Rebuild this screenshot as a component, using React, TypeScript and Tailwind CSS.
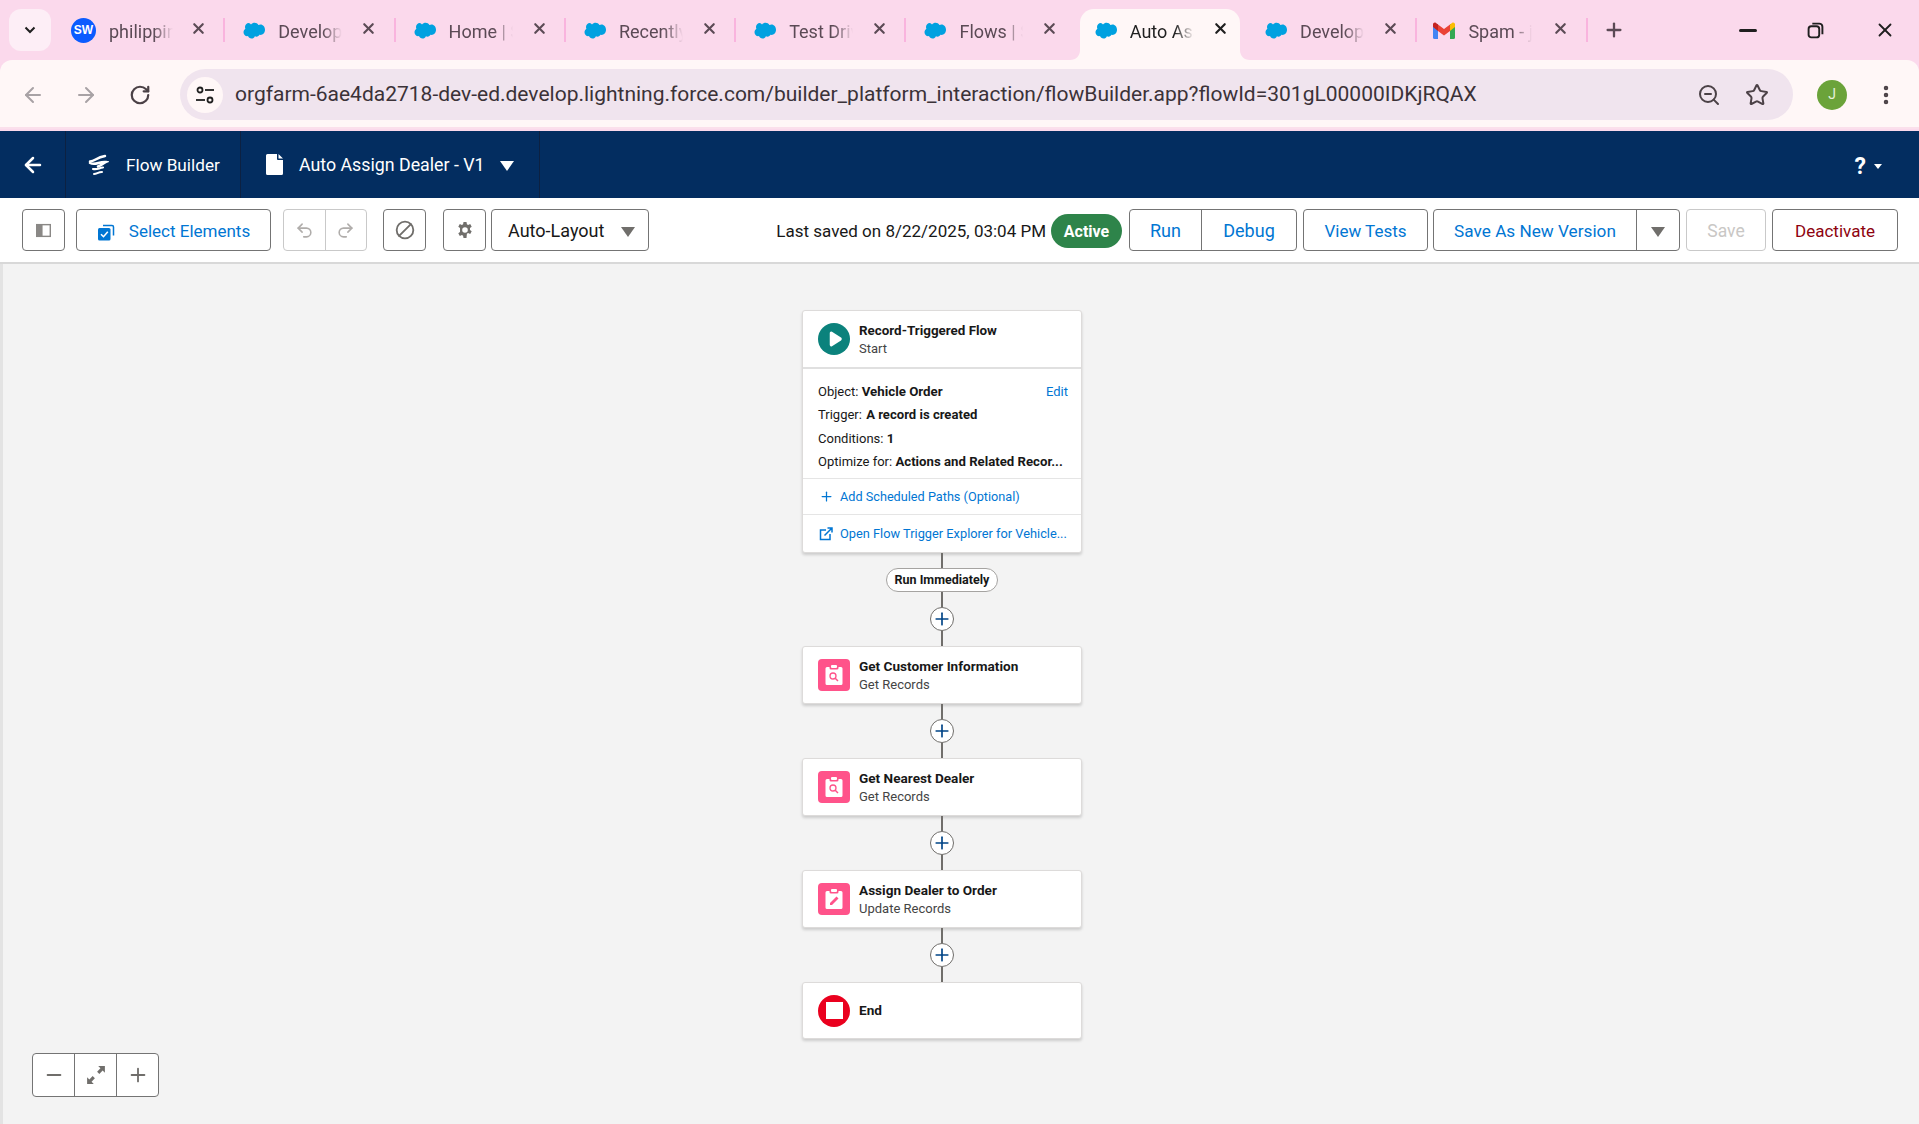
import { ReactNode } from 'react'
import { ArrowLeft, ArrowRight, RotateCw, ZoomOut, Star, X, Plus, Minus, EllipsisVertical, Undo2, Redo2, Ban, Play } from 'lucide-react'

const tabs = ['philippines', 'Developer', 'Home | Sales', 'Recently', 'Test Drive', 'Flows | Sales', 'Auto Assign', 'Developer', 'Spam - jo']

function Cloud() {
  return (
    <svg viewBox="0 0 24 17" className="w-[24px] h-[17px] shrink-0">
      <path fill="#00a1e0" d="M10 2.600C10.900 1.400 12.200.8 13.600.8c1.600 0 3 .9 3.800 2.200.7-.3 1.400-.5 2.100-.5 2.500 0 4.500 2.300 4.500 5.200s-2 5.200-4.500 5.200c-.4 0-.7 0-1-.1-.6 1.100-1.700 1.900-3 1.900-.6 0-1.100-.2-1.600-.4-.6 1.400-1.900 2.300-3.400 2.300-1.600 0-3-1-3.500-2.500-.2.1-.5.1-.8.1C4.200 14.200 2.500 12.400 2.500 10.200c0-1.500.8-2.800 1.900-3.500-.2-.5-.4-1.100-.4-1.700C4 2.800 5.700.9 7.800.9 8.600 1 9.400 1.700 10 2.600z" />
    </svg>
  )
}

function Gmail() {
  return (
    <svg viewBox="0 0 22 18" className="w-[22px] h-[18px] shrink-0">
      <path fill="#4285f4" d="M0 3h5v15H1.500A1.500 1.500 0 0 1 0 16.500z" />
      <path fill="#34a853" d="M17 3h5v13.500a1.500 1.500 0 0 1-1.500 1.500H17z" />
      <path fill="#ea4335" d="M5 3.500 11 8l6-4.500V10l-6 4.500L5 10z" />
      <path fill="#fbbc04" d="M17 3.500 19 2c1.300-1 3-.1 3 1.500V6l-5 4z" />
      <path fill="#c5221f" d="M5 3.500 3 2C1.700 1 0 1.900 0 3.500V6l5 4z" />
    </svg>
  )
}

function TabIcon({ i }: { i: number }) {
  if (i === 0) {
    return (
      <span className="w-[25px] h-[25px] shrink-0 rounded-full bg-[#0b5cff] text-white flex items-center justify-center text-[12px] font-bold font-['Liberation_Sans',sans-serif]">SW</span>
    )
  }
  if (i === 8) return <Gmail />
  return <Cloud />
}

function ChromeTabs() {
  return (
    <div className="h-[60px] bg-[#fbd9ec] flex items-start shrink-0">
      <div className="w-[42px] h-[42px] mt-[9px] ml-[9px] mr-[4px] rounded-[12px] bg-[#fdeef6] flex items-center justify-center">
        <svg viewBox="0 0 12 8" className="w-[12px] h-[8px]"><path d="M1.500 1.500 6 6l4.500-4.500" fill="none" stroke="#1f1f1f" strokeWidth="2" /></svg>
      </div>
      {tabs.map((t, i) => {
        const active = i === 6
        return (
          <div key={i} className="relative w-[170.3px] h-[60px] shrink-0 flex items-center">
            {active && (
              <div className="absolute left-[3px] right-[7px] top-[9px] bottom-0 rounded-t-[14px] bg-[#fff7f7]">
                <svg viewBox="0 0 10 10" className="absolute -left-[10px] bottom-0 w-[10px] h-[10px]"><path d="M10 0v10H0C6 10 10 6 10 0z" fill="#fff7f7" /></svg>
                <svg viewBox="0 0 10 10" className="absolute -right-[10px] bottom-0 w-[10px] h-[10px]"><path d="M0 0v10h10C4 10 0 6 0 0z" fill="#fff7f7" /></svg>
              </div>
            )}
            <div className="relative flex items-center w-full h-[42px] pl-[16px]">
              <TabIcon i={i} />
              <span className={`ml-[13px] mt-[3px] w-[64px] overflow-hidden whitespace-nowrap text-[18px] leading-[24px] [mask-image:linear-gradient(to_right,black_70%,transparent_100%)] ${active ? 'text-[#1f1f1f]' : 'text-[#5b4a55]'}`}>{t}</span>
              <X size={17} strokeWidth={3} className={`absolute left-[135px] top-[11px] ${active ? 'text-[#1f1f1f]' : 'text-[#5b4a55]'}`} />
            </div>
            {!active && i !== 5 && <div className="absolute right-0 top-[18px] w-[2px] h-[24px] bg-[#f9b4de]" />}
          </div>
        )
      })}
      <Plus size={22} strokeWidth={2.5} className="text-[#5b4a55] ml-[15px] mt-[19px]" />
      <div className="ml-auto flex items-center h-[60px] text-[#1f1f1f] pr-[23px] gap-[50px]">
        <div className="w-[18px] h-[3px] bg-[#1f1f1f] rounded-full" />
        <svg viewBox="0 0 16 16" className="w-[17px] h-[17px]" fill="none" stroke="#1f1f1f" strokeWidth="1.800">
          <rect x="1.500" y="4" width="10" height="10.500" rx="2.500" />
          <path d="M5 1.500h6.500a3 3 0 0 1 3 3v7" />
        </svg>
        <X size={22} strokeWidth={2} />
      </div>
    </div>
  )
}

function AddressBar() {
  return (
    <div className="h-[71px] shrink-0 bg-[#fbd9ec]">
      <div className="h-[69px] pt-[2px] bg-[#fff7f7] rounded-t-[12px] flex items-center border-b-2 border-[#fbe0ec] text-[#5b5157]">
        <ArrowLeft size={24} strokeWidth={2} className="ml-[21px] text-[#a8a2a5]" />
        <ArrowRight size={24} strokeWidth={2} className="ml-[29px] text-[#a8a2a5]" />
        <RotateCw size={22} strokeWidth={2.4} className="ml-[31px] text-[#4b4146]" />
        <div className="ml-[29px] w-[1613px] h-[51px] rounded-full bg-[#f0e4ee] flex items-center pl-[7px] pr-[24px]">
          <div className="w-[36px] h-[36px] rounded-full bg-[#fff7f7] flex items-center justify-center">
            <svg viewBox="0 0 20 20" className="w-[20px] h-[20px]" fill="none" stroke="#1f1f1f" strokeWidth="1.800">
              <circle cx="5" cy="5" r="2.500" /><path d="M10 5h9" /><circle cx="15" cy="15" r="2.500" /><path d="M1 15h9" />
            </svg>
          </div>
          <span className="ml-[12px] mt-[1px] text-[21px] text-[#3b3238] whitespace-nowrap">orgfarm-6ae4da2718-dev-ed.develop.lightning.force.com/builder_platform_interaction/flowBuilder.app?flowId=301gL00000IDKjRQAX</span>
          <ZoomOut size={24} strokeWidth={2} className="ml-auto text-[#4b4146]" />
          <Star size={24} strokeWidth={2} className="ml-[24px] text-[#4b4146]" />
        </div>
        <div className="ml-[24px] w-[30px] h-[30px] rounded-full bg-[#6ba33a] text-[#e6f1da] text-[14px] flex items-center justify-center">J</div>
        <EllipsisVertical size={24} strokeWidth={2.5} className="ml-[27px] text-[#4b4146]" />
      </div>
    </div>
  )
}

function BuilderHeader() {
  return (
    <div className="h-[67px] shrink-0 bg-[#032d60] text-white flex items-center">
      <div className="w-[66px] h-full flex items-center justify-center border-r border-[#0c2142]">
        <ArrowLeft size={24} strokeWidth={2.5} />
      </div>
      <div className="w-[175px] h-full flex items-center border-r border-[#0c2142] pl-[21px]">
        <svg viewBox="0 0 22 22" className="w-[22px] h-[22px]" fill="none" stroke="white" strokeLinecap="round">
          <path strokeWidth="2.500" d="M3 7.500c5 0 6-4 15-5.500" />
          <path strokeWidth="2.500" d="M3 9c6 3 9-2 16-1-3 1.500-4 3-8 4.500" />
          <path strokeWidth="2.200" d="M6 15c4 1 6-1 10-1.500" />
          <path strokeWidth="2" d="M7 20c3 0 4-2 8-2" />
        </svg>
        <span className="ml-[17px] mt-[2px] text-[17.2px]">Flow Builder</span>
      </div>
      <div className="w-[299px] h-full flex items-center border-r border-[#0c2142] pl-[25px]">
        <svg viewBox="0 0 17 21" className="w-[17px] h-[21px]"><path fill="white" d="M1.500 0H11v5a1 1 0 0 0 1 1h5v13.500a1.500 1.500 0 0 1-1.500 1.500h-14A1.500 1.500 0 0 1 0 19.500V1.500A1.500 1.500 0 0 1 1.500 0zM12.500 0 17 4.500h-4.500z" /></svg>
        <span className="ml-[16px] mt-[2px] text-[17.8px] whitespace-nowrap">Auto Assign Dealer - V1</span>
        <svg viewBox="0 0 14 10" className="ml-[15px] mt-[3px] w-[14px] h-[10px]"><path fill="white" d="M0 0h14L7 10z" /></svg>
      </div>
      <div className="ml-auto flex items-center pr-[37px] gap-[8px]">
        <span className="text-[23px] font-bold mt-[5px]">?</span>
        <svg viewBox="0 0 8 5" className="w-[8px] h-[5px] mt-[3px]"><path fill="white" d="M0 0h8L4 5z" /></svg>
      </div>
    </div>
  )
}

function Btn({ children, className = '' }: { children: ReactNode; className?: string }) {
  return (
    <div className={`h-[42px] shrink-0 flex items-center justify-center bg-white border border-[#747474] rounded-[4px] text-[17px] ${className}`}>
      {children}
    </div>
  )
}

function Caret() {
  return (
    <svg viewBox="0 0 14 10" className="w-[14px] h-[10px] mt-[3px] shrink-0"><path fill="#706e6b" d="M0 0h14L7 10z" /></svg>
  )
}

function Toolbar() {
  return (
    <div className="h-[66px] shrink-0 bg-white border-b-2 border-[#d8d8d8] flex items-center">
      <Btn className="ml-[22px] w-[43px]">
        <svg viewBox="0 0 16 16" className="w-[15px] h-[15px]"><rect x=".75" y="1.750" width="14.500" height="12.500" fill="none" stroke="#8a8886" strokeWidth="1.500" /><rect x="1" y="2" width="6" height="12" fill="#8a8886" /></svg>
      </Btn>
      <Btn className="ml-[11px] w-[195px] text-[#0176d3] pt-[3px]">
        <svg viewBox="0 0 18 18" className="w-[18px] h-[18px] mr-[14px]">
          <path d="M6 2.500h9a1.500 1.500 0 0 1 1.500 1.500v8.500" fill="none" stroke="#0176d3" strokeWidth="1.500" />
          <rect x="1" y="5" width="12.500" height="12.500" rx="1.500" fill="#0176d3" />
          <path d="M4 11.200 6.500 13.700 10.800 8.800" fill="none" stroke="white" strokeWidth="1.600" />
        </svg>
        Select Elements
      </Btn>
      <div className="ml-[12px] w-[84px] h-[42px] flex border border-[#c9c9c9] rounded-[4px] text-[#b0adab]">
        <div className="flex-1 flex items-center justify-center border-r border-[#c9c9c9]"><Undo2 size={19} strokeWidth={2} /></div>
        <div className="flex-1 flex items-center justify-center"><Redo2 size={19} strokeWidth={2} /></div>
      </div>
      <Btn className="ml-[16px] w-[43px] text-[#706e6b]"><Ban size={20} strokeWidth={2.2} className="-scale-x-100" /></Btn>
      <Btn className="ml-[17px] w-[43px]">
        <svg viewBox="0 0 16 16" className="w-[16px] h-[16px]"><path fill="#706e6b" fillRule="evenodd" d="M6.500 0h3l.4 2.200 1.200.7 2.100-.8 1.500 2.600-1.700 1.400v1.800l1.700 1.400-1.500 2.600-2.100-.8-1.200.7L9.500 16h-3l-.4-2.200-1.200-.7-2.100.8L1.300 11.300 3 9.900V6.100L1.300 4.700l1.500-2.600 2.100.8 1.200-.7zM8 5.200a2.800 2.800 0 1 0 0 5.600 2.800 2.800 0 0 0 0-5.600z" /></svg>
      </Btn>
      <Btn className="ml-[5px] w-[158px] pl-[16px] pr-[13px] text-[#181818] text-[18px]">
        <span className="flex-1">Auto-Layout</span>
        <Caret />
      </Btn>

      <span className="ml-auto mt-[3px] text-[17px] text-[#181818] whitespace-nowrap">Last saved on 8/22/2025, 03:04 PM</span>
      <span className="ml-[5px] w-[71px] h-[34px] pt-[1px] mt-[2px] rounded-full bg-[#2e844a] text-white text-[16px] font-bold flex items-center justify-center">Active</span>
      <div className="ml-[7px] w-[168px] h-[42px] flex bg-white border border-[#747474] rounded-[4px] text-[#0176d3] text-[18px]">
        <div className="w-[72px] pt-[1px] flex items-center justify-center border-r border-[#747474]">Run</div>
        <div className="flex-1 pt-[1px] flex items-center justify-center">Debug</div>
      </div>
      <Btn className="ml-[6px] w-[125px] text-[#0176d3] text-[16.6px] pt-[3px]">View Tests</Btn>
      <div className="ml-[5px] w-[247px] h-[42px] flex border border-[#747474] rounded-[4px] text-[#0176d3] text-[17.2px]">
        <div className="flex-1 pt-[3px] flex items-center justify-center border-r border-[#747474]">Save As New Version</div>
        <div className="w-[42px] flex items-center justify-center"><Caret /></div>
      </div>
      <div className="ml-[6px] w-[80px] h-[42px] pt-[3px] flex items-center justify-center border border-[#c9c9c9] rounded-[4px] text-[#c9c7c5] text-[17.5px]">Save</div>
      <Btn className="ml-[6px] mr-[21px] w-[126px] text-[#8e030f] pt-[3px]">Deactivate</Btn>
    </div>
  )
}

function Line() {
  return <div className="w-[2px] h-[15px] bg-[#706e6b]" />
}

function AddNode() {
  return (
    <div className="w-[24px] h-[24px] rounded-full bg-white border-[1.5px] border-[#706e6b] flex items-center justify-center">
      <Plus size={20} strokeWidth={2} className="text-[#014486]" />
    </div>
  )
}

function Clipboard({ edit }: { edit?: boolean }) {
  return (
    <div className="w-[32px] h-[32px] rounded-[4px] bg-[#ff538a] flex items-center justify-center shrink-0">
      <svg viewBox="0 0 20 22" className="w-[20px] h-[22px]">
        <path fill="white" d="M3 3h2.500v1A1.500 1.500 0 0 0 7 5.500h6A1.500 1.500 0 0 0 14.500 4V3H17a1.500 1.500 0 0 1 1.500 1.500v15A1.500 1.500 0 0 1 17 21H3a1.500 1.500 0 0 1-1.500-1.500v-15A1.500 1.500 0 0 1 3 3z" />
        <rect x="7" y="1" width="6" height="3" rx="1" fill="white" />
        {edit ? (
          <path fill="#ff538a" d="M12.500 8.500 14.500 10.500 8 17H6v-2z" />
        ) : (
          <>
            <circle cx="9" cy="12" r="3" fill="none" stroke="#ff538a" strokeWidth="1.300" />
            <path d="M11.200 14.200 14 17" stroke="#ff538a" strokeWidth="1.500" />
          </>
        )}
      </svg>
    </div>
  )
}

function ElementCard({ title, sub, edit }: { title: string; sub: string; edit?: boolean }) {
  return (
    <div className="w-[280px] h-[58px] shrink-0 bg-white border border-[#dddbda] rounded-[3px] shadow-[0_2px_3px_rgba(0,0,0,0.16)] flex items-center pl-[15px]">
      <Clipboard edit={edit} />
      <div className="ml-[9px]">
        <div className="text-[13.6px] leading-[18px] font-bold text-[#181818]">{title}</div>
        <div className="text-[13px] leading-[19px] text-[#444444]">{sub}</div>
      </div>
    </div>
  )
}

function StartCard() {
  return (
    <div className="w-[280px] shrink-0 bg-white border border-[#dddbda] rounded-[3px] shadow-[0_2px_3px_rgba(0,0,0,0.16)] text-[13px] text-[#181818]">
      <div className="h-[58px] flex items-center pl-[15px] border-b-2 border-[#e0e0e0]">
        <div className="w-[32px] h-[32px] rounded-full bg-[#0b827c] flex items-center justify-center">
          <Play size={20} fill="white" strokeWidth={0} className="text-white ml-[2px] scale-x-90" />
        </div>
        <div className="ml-[9px]">
          <div className="leading-[18px] text-[13.4px] font-bold">Record-Triggered Flow</div>
          <div className="leading-[17px] text-[#444444]">Start</div>
        </div>
      </div>
      <div className="h-[110px] px-[15px] pt-[11px] pr-[13px] border-b border-[#e5e5e5] leading-[23px]">
        <div className="flex justify-between"><span>Object: <b className="text-[13.3px]">Vehicle Order</b></span><span className="text-[#0176d3]">Edit</span></div>
        <div>Trigger: <b className="ml-[1px] text-[13.1px]">A record is created</b></div>
        <div className="mt-[1px]">Conditions: <b>1</b></div>
        <div className="whitespace-nowrap">Optimize for: <b className="text-[13.2px]">Actions and Related Recor...</b></div>
      </div>
      <div className="h-[36px] flex items-center pl-[16px] border-b border-[#e5e5e5] text-[#0176d3] text-[12.7px]">
        <Plus size={15} strokeWidth={2} />
        <span className="ml-[6px]">Add Scheduled Paths (Optional)</span>
      </div>
      <div className="h-[37px] flex items-center pl-[16px] text-[#0176d3] text-[12.8px]">
        <svg viewBox="0 0 14 14" className="w-[14px] h-[14px]" fill="none" stroke="#0176d3" strokeWidth="1.500">
          <path d="M7 3H1.500v9.500H11V7" /><path d="M5.500 8.500 13 1M8.500 1H13v4.500" />
        </svg>
        <span className="ml-[7px] whitespace-nowrap">Open Flow Trigger Explorer for Vehicle...</span>
      </div>
    </div>
  )
}

function FlowCanvas() {
  return (
    <div className="relative flex-1 min-h-0 bg-[#f3f3f3] border-l-[3px] border-[#e3e3e3] overflow-hidden">
      <div className="ml-[799px] w-[280px] pt-[46px] flex flex-col items-center">
        <StartCard />
        <Line />
        <div className="w-[112px] h-[24px] rounded-full bg-white border border-[#a5a3a1] flex items-center justify-center text-[12.5px] font-bold text-[#181818]">Run Immediately</div>
        <Line />
        <AddNode />
        <Line />
        <ElementCard title="Get Customer Information" sub="Get Records" />
        <Line />
        <AddNode />
        <Line />
        <ElementCard title="Get Nearest Dealer" sub="Get Records" />
        <Line />
        <AddNode />
        <Line />
        <ElementCard title="Assign Dealer to Order" sub="Update Records" edit />
        <Line />
        <AddNode />
        <Line />
        <div className="w-[280px] h-[57px] bg-white border border-[#dddbda] rounded-[3px] shadow-[0_2px_3px_rgba(0,0,0,0.16)] flex items-center pl-[15px]">
          <div className="w-[32px] h-[32px] rounded-full bg-[#ea001e] flex items-center justify-center">
            <div className="w-[17px] h-[17px] bg-white" />
          </div>
          <span className="ml-[9px] text-[13.6px] font-bold text-[#181818]">End</span>
        </div>
      </div>

      <div className="absolute left-[29px] bottom-[27px] w-[127px] h-[44px] flex bg-white border border-[#747474] rounded-[4px] text-[#706e6b]">
        <div className="w-[42px] flex items-center justify-center border-r border-[#747474]"><Minus size={22} strokeWidth={2} /></div>
        <div className="w-[42px] flex items-center justify-center border-r border-[#747474]">
          <svg viewBox="0 0 18 18" className="w-[20px] h-[20px]" fill="#706e6b">
            <path d="M11 1h6v6l-2-2-3 3-2-2 3-3zM7 17H1v-6l2 2 3-3 2 2-3 3z" />
          </svg>
        </div>
        <div className="flex-1 flex items-center justify-center"><Plus size={22} strokeWidth={2} /></div>
      </div>
    </div>
  )
}

export default function App() {
  return (
    <div className="h-[1124px] w-[1919px] flex flex-col overflow-hidden font-['Roboto',sans-serif]">
      <ChromeTabs />
      <AddressBar />
      <BuilderHeader />
      <Toolbar />
      <FlowCanvas />
    </div>
  )
}
